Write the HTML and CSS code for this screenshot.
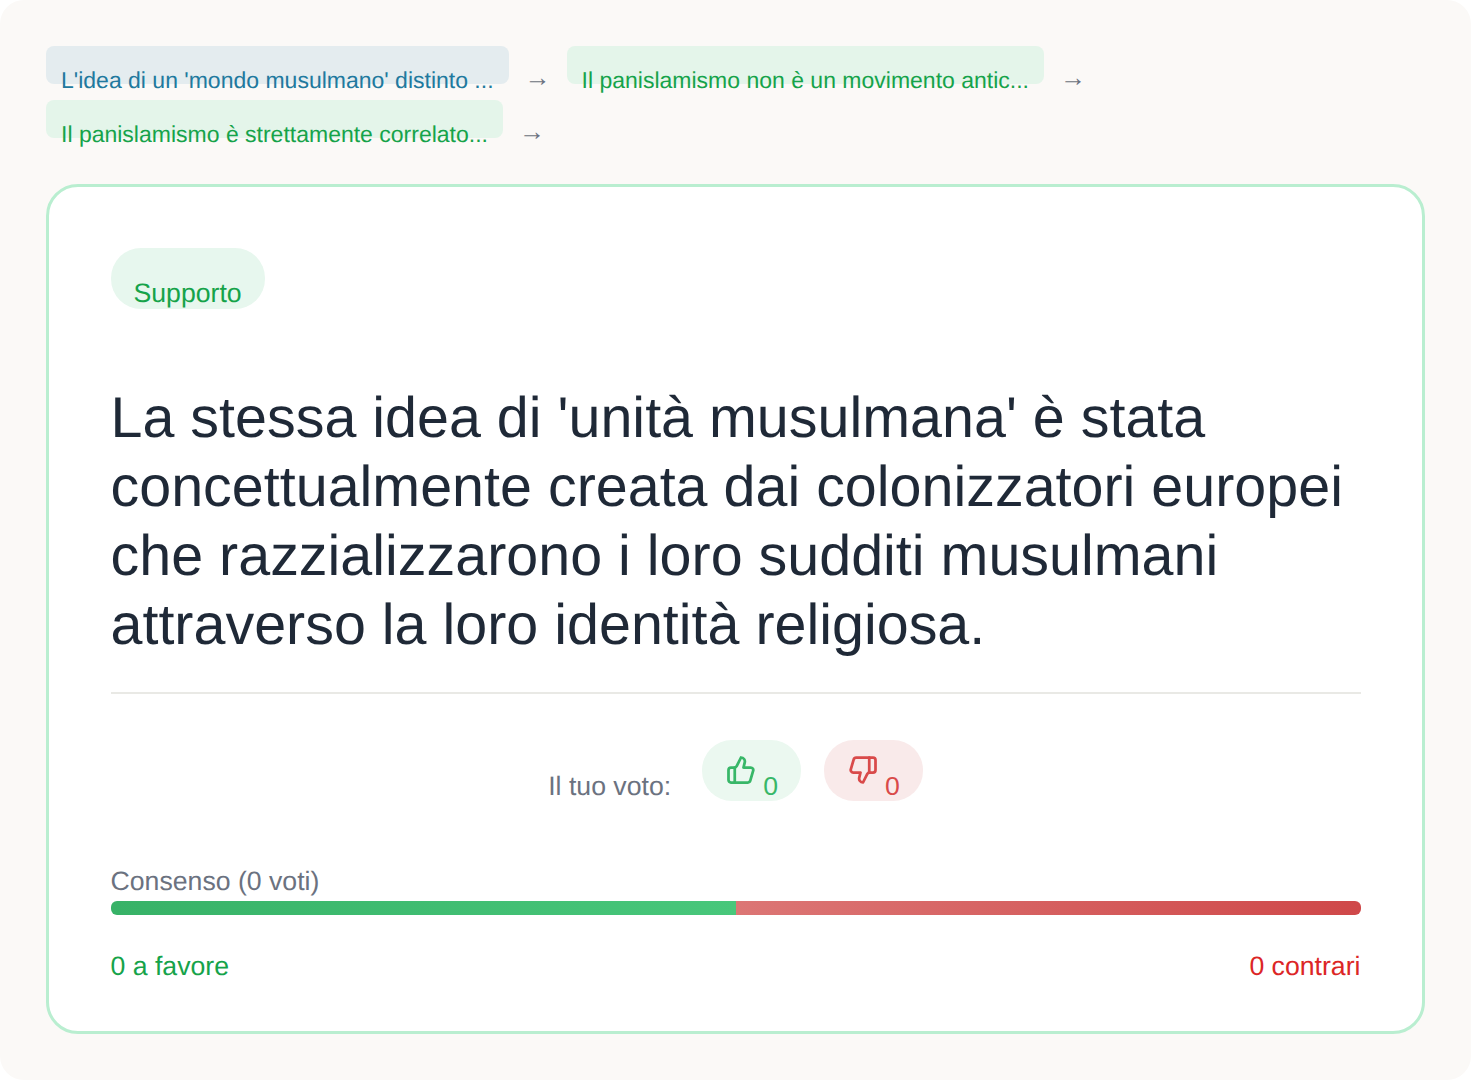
FILE: index.html
```html
<!DOCTYPE html>
<html lang="it">
<head>
    <meta charset="UTF-8">
    <meta name="viewport" content="width=device-width, initial-scale=1.0">
    <title>Supporto</title>
    <link rel="stylesheet" href="styles.css">
</head>
<body>
    <div class="page">
        <nav class="trail">
            <div class="crumb">
                <a class="chip chip-root">L'idea di un 'mondo musulmano' distinto ...</a>
                <span class="arrow">→</span>
            </div>
            <div class="crumb">
                <a class="chip chip-support">Il panislamismo non è un movimento antic...</a>
                <span class="arrow">→</span>
            </div>
            <div class="crumb">
                <a class="chip chip-support">Il panislamismo è strettamente correlato...</a>
                <span class="arrow">→</span>
            </div>
        </nav>

        <main class="card">
            <span class="badge">Supporto</span>

            <h1 class="claim">La stessa idea di 'unità musulmana' è stata concettualmente creata dai colonizzatori europei che razzializzarono i loro sudditi musulmani attraverso la loro identità religiosa.</h1>

            <div class="vote-row">
                <span class="vote-label">Il tuo voto:</span>
                <button class="vote vote-up">
                    <svg class="vote-icon" viewBox="0 0 24 24" fill="none" stroke="currentColor" stroke-width="2.2" stroke-linecap="round" stroke-linejoin="round">
                        <path d="M7 10v12"/>
                        <path d="M15 5.88 14 10h5.83a2 2 0 0 1 1.92 2.56l-2.33 8A2 2 0 0 1 17.5 22H4a2 2 0 0 1-2-2v-8a2 2 0 0 1 2-2h2.76a2 2 0 0 0 1.79-1.11L12 2a3.13 3.13 0 0 1 3 3.88Z"/>
                    </svg>
                    <span>0</span>
                </button>
                <button class="vote vote-down">
                    <svg class="vote-icon" viewBox="0 0 24 24" fill="none" stroke="currentColor" stroke-width="2.2" stroke-linecap="round" stroke-linejoin="round">
                        <path d="M17 14V2"/>
                        <path d="M9 18.12 10 14H4.17a2 2 0 0 1-1.92-2.56l2.33-8A2 2 0 0 1 6.5 2H20a2 2 0 0 1 2 2v8a2 2 0 0 1-2 2h-2.76a2 2 0 0 0-1.79 1.11L12 22a3.13 3.13 0 0 1-3-3.88Z"/>
                    </svg>
                    <span>0</span>
                </button>
            </div>

            <div class="consensus">
                <div class="consensus-label">Consenso (0 voti)</div>
                <div class="bar">
                    <div class="bar-part bar-for"></div>
                    <div class="bar-part bar-against"></div>
                </div>
                <div class="totals">
                    <span class="total-for">0 a favore</span>
                    <span class="total-against">0 contrari</span>
                </div>
            </div>
        </main>
    </div>
</body>
</html>
```

FILE: styles.css
```css
html, body {
    margin: 0;
    background: #fff;
}

body {
    font-family: "Liberation Sans", Arial, sans-serif;
    text-rendering: geometricPrecision;
}

.page {
    box-sizing: border-box;
    height: 1080px;
    padding: 46px 46px 0;
    background: #fbf9f7;
    border-radius: 24px;
}

.trail {
    display: flex;
    flex-wrap: wrap;
    row-gap: 16px;
    column-gap: 16px;
    margin-bottom: 46px;
}

.crumb {
    display: flex;
    align-items: flex-start;
    gap: 16px;
}

.chip {
    display: block;
    height: 38px;
    padding: 0 15px;
    font-size: 23px;
    line-height: 68px;
    border-radius: 8px;
    white-space: nowrap;
}

.chip-root {
    background: #e4ecef;
    color: #21799e;
}

.chip-support {
    background: #e4f5ea;
    color: #16a34a;
}

.arrow {
    font-size: 26px;
    line-height: 62px;
    height: 38px;
    color: #6b7280;
}

.card {
    box-sizing: border-box;
    height: 850px;
    padding: 61px 61.5px 62px;
    background: #fff;
    border: 3px solid #b9eed0;
    border-radius: 32px;
}

.badge {
    display: inline-block;
    height: 61px;
    padding: 0 23px;
    font-size: 26.67px;
    line-height: 90px;
    border-radius: 30px;
    background: #e7f7ee;
    color: #16a34a;
}

.claim {
    margin: 75px 0 0;
    padding-bottom: 32px;
    font-size: 57.45px;
    font-weight: 400;
    line-height: 69px;
    color: #1f2937;
    border-bottom: 2px solid #e9e9e5;
}

.vote-row {
    display: flex;
    justify-content: center;
    align-items: flex-start;
    gap: 23px;
    margin-top: 46px;
}

.vote-label {
    margin-right: 8px;
    font-size: 26.67px;
    line-height: 92px;
    height: 61px;
    color: #6b7280;
}

.vote {
    display: flex;
    align-items: flex-start;
    gap: 7px;
    height: 61px;
    padding: 15px 23px 0 24px;
    border: 0;
    border-radius: 30px;
    font-family: inherit;
    font-size: 26.67px;
}

.vote span {
    margin-top: 15px;
    line-height: 32px;
}

.vote-icon {
    width: 30px;
    height: 30px;
}

.vote-up {
    background: #ebf8f0;
    color: #38b768;
}

.vote-down {
    background: #f9eaea;
    color: #d94a4a;
}

.consensus {
    margin-top: 65px;
}

.consensus-label {
    font-size: 26.67px;
    line-height: 30px;
    color: #6b7280;
}

.bar {
    display: flex;
    height: 14px;
    margin-top: 5px;
    border-radius: 6px;
    overflow: hidden;
}

.bar-part {
    flex: 1;
}

.bar-for {
    background: linear-gradient(90deg, #37b267, #48c77b);
}

.bar-against {
    background: linear-gradient(90deg, #dc7675, #cf4849);
}

.totals {
    display: flex;
    justify-content: space-between;
    margin-top: 36px;
    font-size: 26.67px;
    line-height: 30px;
}

.total-for {
    color: #16a34a;
}

.total-against {
    color: #dc2626;
}
```
